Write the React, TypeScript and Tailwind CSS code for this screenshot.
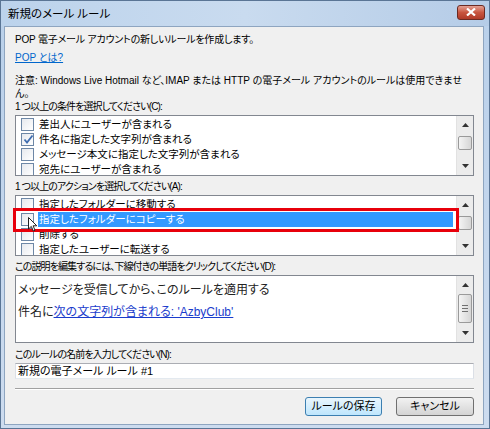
import React from 'react';

const font = "font-['Liberation_Sans','Noto_Sans_CJK_JP',sans-serif] [font-feature-settings:'palt']";
const label = 'h-[13px] leading-[13px] text-[10px] tracking-[-0.9px]';

const Checkbox = ({ checked = false }: { checked?: boolean }) => (
  <span className="relative flex-shrink-0 w-[13px] h-[13px] border border-[#6d87a6] bg-gradient-to-br from-[#e6e9ee] to-white">
    {checked && (
      <svg className="absolute left-[1px] top-[0px]" width="11" height="11" viewBox="0 0 11 11">
        <path d="M1.5 5.5 L4 8.5 L9.5 1.5" fill="none" stroke="#3f6db0" strokeWidth="1.8" />
      </svg>
    )}
  </span>
);

const Scrollbar = ({ thumbTop, thumbHeight, grip = false }: { thumbTop: number; thumbHeight: number; grip?: boolean }) => (
  <div className="relative w-[17px] h-full flex-shrink-0 bg-[#ececec] border-l border-[#e2e2e2]">
    <svg className="absolute left-[5px] top-[7px]" width="7" height="4" viewBox="0 0 7 4">
      <path d="M0 4 L3.5 0 L7 4 Z" fill="#333" />
    </svg>
    <div
      className="absolute left-[1px] w-[14px] rounded-[2px] border border-[#9a9a9a] bg-gradient-to-r from-[#f4f4f4] to-[#d6d6d6] flex flex-col items-center justify-center gap-[2px]"
      style={{ top: thumbTop, height: thumbHeight }}
    >
      {grip && (
        <>
          <span className="w-[6px] h-[1px] bg-[#707070]" />
          <span className="w-[6px] h-[1px] bg-[#707070]" />
          <span className="w-[6px] h-[1px] bg-[#707070]" />
        </>
      )}
    </div>
    <svg className="absolute left-[5px] bottom-[7px]" width="7" height="4" viewBox="0 0 7 4">
      <path d="M0 0 L7 0 L3.5 4 Z" fill="#333" />
    </svg>
  </div>
);

const CheckList = ({ items, selected }: { items: { label: string; checked?: boolean }[]; selected?: number }) => (
  <div className="flex h-[61px] border border-[#828790] bg-white overflow-hidden">
    <div className="flex-1 pt-[1px] overflow-hidden">
      {items.map((item, i) => (
        <div key={i} className="flex items-center h-[15px] pl-[5px] pr-[3px] gap-[4px]">
          <Checkbox checked={item.checked} />
          <span
            className={`flex-1 h-[15px] leading-[15px] pl-[1px] text-[10.5px] whitespace-nowrap ${
              i === selected ? 'bg-[#3399ff] text-white' : ''
            }`}
          >
            {item.label}
          </span>
        </div>
      ))}
    </div>
    <Scrollbar thumbTop={20} thumbHeight={14} />
  </div>
);

const Button = ({ children, primary = false }: { children: React.ReactNode; primary?: boolean }) => (
  <button
    className={`h-[19px] rounded-[3px] border text-[11px] leading-[17px] ${
      primary
        ? 'w-[77px] border-[#3c7fb1] bg-gradient-to-b from-[#eaf6fd] to-[#bee6fd]'
        : 'w-[78px] border-[#707070] bg-gradient-to-b from-[#f2f2f2] to-[#d4d4d4]'
    }`}
  >
    {children}
  </button>
);

export default function App() {
  return (
    <div className={`relative w-[490px] h-[429px] flex flex-col border border-[#5a7595] bg-gradient-to-b from-[#b9d0ea] to-[#cddcef] text-[10px] text-black ${font}`}>
      {/* title bar */}
      <div className="flex items-center justify-between h-[25px] pl-[7px] pr-[4px] bg-gradient-to-r from-[#bcd3ec] via-[#c9dbef] to-[#b5cce7]">
        <span className="text-[11.5px] leading-[14px] text-black">新規のメール ルール</span>
        <div className="w-[28px] h-[15px] mb-[3px] rounded-[3px] border border-[#6b2a22] bg-gradient-to-b from-[#e3a093] via-[#c8553f] to-[#b03a28] flex items-center justify-center">
          <svg width="10" height="8" viewBox="0 0 10 8">
            <path d="M1 0.5 L9 7.5 M9 0.5 L1 7.5" stroke="#fff" strokeWidth="2.2" />
          </svg>
        </div>
      </div>

      {/* dialog body */}
      <div className="flex-1 ml-[3px] mr-[5px] mb-[3px] border border-[#8ea5c0] bg-[#f0f0f0] pl-[10px] pr-[9px] pt-[6px] flex flex-col">
        <p className="h-[14px] leading-[14px] tracking-[-0.2px]">POP 電子メール アカウントの新しいルールを作成します。</p>
        <a className="mt-[4px] h-[14px] leading-[14px] w-fit text-[#0066cc] underline">POP とは?</a>
        <p className="mt-[9px] leading-[13px] whitespace-nowrap">
          注意: Windows Live Hotmail など、IMAP または HTTP の電子メール アカウントのルールは使用できませ
          <br />
          ん。
        </p>

        <p className={label}>1 つ以上の条件を選択してください(C):</p>
        <div className="mt-[2px]">
          <CheckList
            items={[
              { label: '差出人にユーザーが含まれる' },
              { label: '件名に指定した文字列が含まれる', checked: true },
              { label: 'メッセージ本文に指定した文字列が含まれる' },
              { label: '宛先にユーザーが含まれる' },
            ]}
          />
        </div>

        <p className={`mt-[4px] ${label}`}>1 つ以上のアクションを選択してください(A):</p>
        <div className="relative mt-[2px]">
          <CheckList
            selected={1}
            items={[
              { label: '指定したフォルダーに移動する' },
              { label: '指定したフォルダーにコピーする' },
              { label: '削除する' },
              { label: '指定したユーザーに転送する' },
            ]}
          />
          {/* red callout around the selected action */}
          <div className="absolute left-[-2px] top-[13px] w-[446px] h-[24px] border-[3px] border-[#e8000b]" />
          {/* mouse pointer */}
          <svg className="absolute left-[13px] top-[22px]" width="10" height="16" viewBox="0 0 10 16">
            <path d="M0.5 0.5 L0.5 12 L3.3 9.4 L5.3 14 L7 13.2 L5.1 8.8 L8.8 8.8 Z" fill="#fff" stroke="#222" strokeWidth="1" />
          </svg>
        </div>

        <p className={`mt-[4px] ${label}`}>この説明を編集するには、下線付きの単語をクリックしてください(D):</p>
        <div className="mt-[2px] flex h-[68px] border border-[#828790] bg-white">
          <div className="flex-1 pl-[2px] pt-[3px] text-[12px] leading-[22px] text-[#222]">
            <p>メッセージを受信してから、このルールを適用する</p>
            <p>
              件名に<a className="text-[#1a3ccc] underline">次の文字列が含まれる: 'AzbyClub'</a>
            </p>
          </div>
          <Scrollbar thumbTop={18} thumbHeight={29} grip />
        </div>

        <p className={`mt-[5px] ${label}`}>このルールの名前を入力してください(N):</p>
        <div className="mt-[2px] h-[16px] border border-[#abadb3] border-x-[#dbdfe6] border-b-[#e3e9ef] bg-white pl-[2px] text-[11px] leading-[14px]">
          新規の電子メール ルール #1
        </div>

        <div className="mt-[9px] border-t border-[#a0a0a0] border-b border-b-white" />

        <div className="mt-[7px] flex justify-end gap-[14px]">
          <Button primary>ルールの保存</Button>
          <Button>キャンセル</Button>
        </div>
      </div>
    </div>
  );
}
